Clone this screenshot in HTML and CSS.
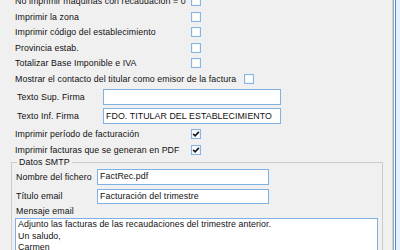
FILE: index.html
```html
<!DOCTYPE html>
<html lang="es">
<head>
<meta charset="utf-8">
<title>Opciones de factura</title>
<link rel="stylesheet" href="styles.css">
</head>
<body>
<div class="window">
  <div class="panel">
    <div class="content">
      <div class="chk-list">
        <div class="row"><span>No imprimir máquinas con recaudación = 0</span><span class="cb"></span></div>
        <div class="row"><span>Imprimir la zona</span><span class="cb"></span></div>
        <div class="row"><span>Imprimir código del establecimiento</span><span class="cb"></span></div>
        <div class="row"><span>Provincia estab.</span><span class="cb"></span></div>
        <div class="row"><span>Totalizar Base Imponible e IVA</span><span class="cb"></span></div>
      </div>
      <div class="row-inline"><span>Mostrar el contacto del titular como emisor de la factura</span><span class="cb"></span></div>
      <div class="fields">
        <div class="field"><span class="flabel">Texto Sup. Firma</span><div class="input"></div></div>
        <div class="field"><span class="flabel">Texto Inf. Firma</span><div class="input">FDO. TITULAR DEL ESTABLECIMIENTO</div></div>
      </div>
      <div class="chk-list checked-list">
        <div class="row tall"><span>Imprimir período de facturación</span><span class="cb on"><svg viewBox="0 0 10 10" width="10" height="10"><path d="M2.2 4.9 L4.1 6.8 L7.9 2.9" fill="none" stroke="#1a1a1a" stroke-width="1.7"/></svg></span></div>
        <div class="row tall"><span>Imprimir facturas que se generan en PDF</span><span class="cb on"><svg viewBox="0 0 10 10" width="10" height="10"><path d="M2.2 4.9 L4.1 6.8 L7.9 2.9" fill="none" stroke="#1a1a1a" stroke-width="1.7"/></svg></span></div>
      </div>
      <fieldset class="group">
        <legend>Datos SMTP</legend>
        <div class="sfield"><span class="slabel">Nombre del fichero</span><div class="sinput">FactRec.pdf</div></div>
        <div class="sfield"><span class="slabel">Título email</span><div class="sinput">Facturación del trimestre</div></div>
        <div class="mlabel">Mensaje email</div>
        <div class="textarea">Adjunto las facturas de las recaudaciones del trimestre anterior.<br>Un saludo,<br>Carmen<br>&nbsp;</div>
      </fieldset>
    </div>
  </div>
  <div class="sep"></div>
  <div class="gap"></div>
  <div class="edge"></div>
</div>
</body>
</html>
```
FILE: styles.css
```css
html, body {
  margin: 0;
  padding: 0;
}
body {
  width: 400px;
  height: 250px;
  overflow: hidden;
  background: #f0f0f0;
  font-family: "Liberation Sans", Arial, sans-serif;
  font-size: 8.8px;
  letter-spacing: 0.08px;
  color: #111;
}
.window {
  display: flex;
  width: 400px;
  height: 250px;
  overflow: hidden;
}
.panel {
  box-sizing: border-box;
  width: 393px;
  flex: none;
  border-right: 1px solid #cfcfcf;
  overflow: hidden;
}
.sep {
  width: 1px;
  flex: none;
  background: #a8a8a8;
}
.gap {
  width: 1px;
  flex: none;
  background: #ffffff;
}
.edge {
  flex: 1;
  border-left: 1px solid #3a8ee0;
  background: #e5f1fb;
}
.content {
  margin-top: -6.75px;
}
.chk-list {
  display: flex;
  flex-direction: column;
}
.row {
  display: grid;
  grid-template-columns: 176px 10px;
  align-items: center;
  height: 15.5px;
  padding-left: 15px;
  white-space: nowrap;
}
.row.tall {
  height: 16px;
}
.row-inline {
  display: flex;
  align-items: center;
  gap: 8px;
  height: 15.5px;
  padding-left: 15px;
  white-space: nowrap;
}
.cb {
  box-sizing: border-box;
  width: 10px;
  height: 10px;
  border: 1px solid #86b5e5;
  background: #fff;
  box-shadow: inset 0 0 0 1px #eef5fc;
  display: flex;
  align-items: center;
  justify-content: center;
  position: relative;
}
.cb svg {
  position: absolute;
  left: -1px;
  top: -1px;
}
.fields {
  display: flex;
  flex-direction: column;
  gap: 2.5px;
  margin-top: 2.75px;
  margin-bottom: 2px;
}
.field {
  display: grid;
  grid-template-columns: 86px 178px;
  align-items: center;
  padding-left: 17px;
}
.input {
  box-sizing: border-box;
  height: 16px;
  border: 1px solid #7fb1e3;
  background: #fff;
  padding-left: 2px;
  line-height: 14px;
  white-space: nowrap;
  overflow: hidden;
}
.group {
  box-sizing: border-box;
  width: 372px;
  margin: -1px 0 0 11px;
  padding: 1.5px 3px 0 3px;
  border: 1px solid #cbcbcb;
  min-width: 0;
}
.group legend {
  margin-left: 2px;
  padding: 0 2px;
  line-height: 11px;
}
.sfield {
  display: grid;
  grid-template-columns: 81px 172px;
  align-items: center;
  padding-left: 1px;
  margin-bottom: 4px;
}
.sinput {
  box-sizing: border-box;
  height: 15.5px;
  border: 1px solid #7fb1e3;
  background: #fff;
  padding-left: 2px;
  line-height: 13.5px;
  white-space: nowrap;
}
.mlabel {
  padding-left: 1px;
  line-height: 11px;
  margin-top: -2.5px;
  margin-bottom: 1.5px;
}
.textarea {
  box-sizing: border-box;
  width: 363px;
  height: 60px;
  border: 1px solid #7fb1e3;
  background: #fff;
  padding: 0 0 0 2px;
  line-height: 11.6px;
  white-space: nowrap;
}
```
